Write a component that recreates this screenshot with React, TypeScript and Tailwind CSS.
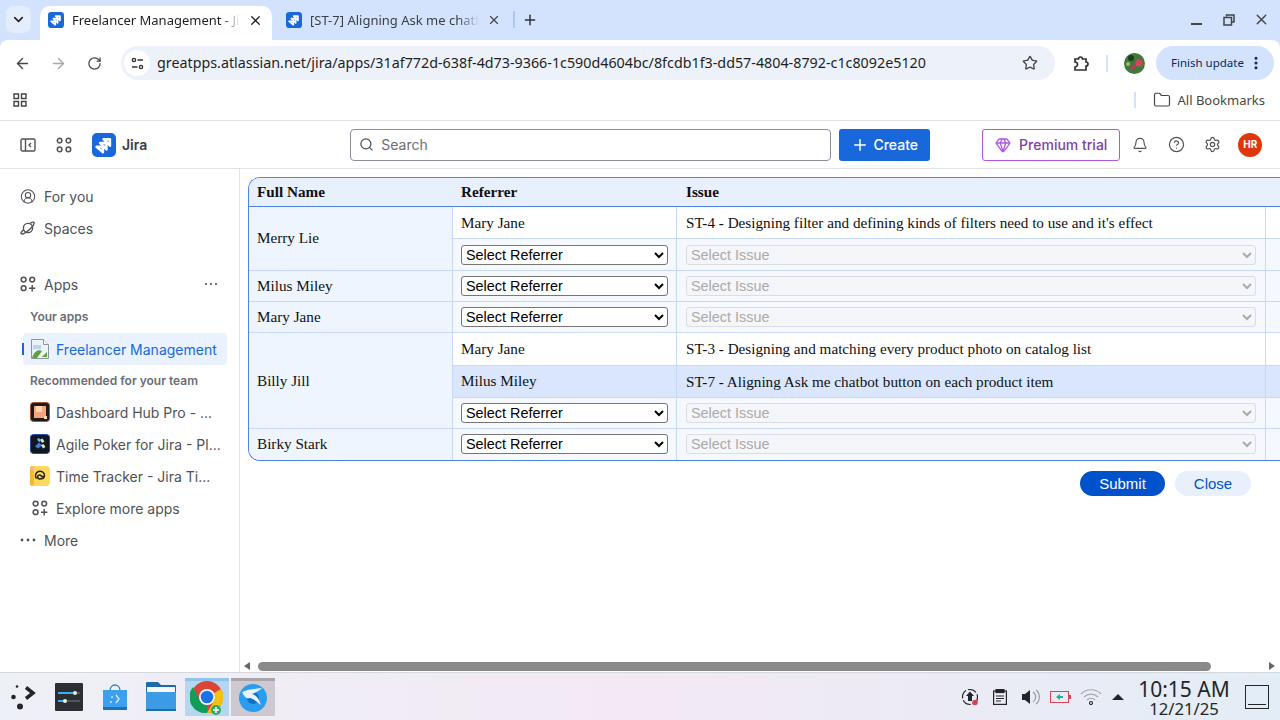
import {
  ArrowLeft,
  ArrowRight,
  Bell,
  ChevronDown,
  CircleHelp,
  CircleUserRound,
  EllipsisVertical,
  Folder,
  Gem,
  Plus,
  RotateCw,
  Search,
  Settings,
  Star,
  X,
} from "lucide-react"

const ui = "font-['Noto_Sans',sans-serif]"
const jira = "font-['Inter',sans-serif]"

type Row = {
  ref?: string
  issue?: string
  h: string
  active?: boolean
  refPad?: string
  issuePad?: string
}

type Person = { name: string; rows: Row[]; last?: boolean; namePad?: string }

const people: Person[] = [
  {
    name: "Merry Lie",
    rows: [
      {
        ref: "Mary Jane",
        issue: "ST-4 - Designing filter and defining kinds of filters need to use and it's effect",
        h: "h-[32px]",
        refPad: "pt-[2px]",
        issuePad: "pt-[2px]",
      },
      { h: "h-[32px]" },
    ],
  },
  { name: "Milus Miley", rows: [{ h: "h-[31px]" }] },
  { name: "Mary Jane", rows: [{ h: "h-[31px]" }] },
  {
    name: "Billy Jill",
    namePad: "pt-[2px]",
    rows: [
      { ref: "Mary Jane", issue: "ST-3 - Designing and matching every product photo on catalog list", h: "h-[33px]" },
      {
        ref: "Milus Miley",
        issue: "ST-7 - Aligning Ask me chatbot button on each product item",
        h: "h-[32px]",
        active: true,
        issuePad: "pt-[2px]",
      },
      { h: "h-[31px]" },
    ],
  },
  { name: "Birky Stark", rows: [{ h: "h-[31px]", refPad: "pb-[2px]", issuePad: "pb-[2px]" }], last: true },
]

function JiraLogo({ size }: { size: number }) {
  return (
    <svg width={size} height={size} viewBox="0 0 24 24" className="shrink-0">
      <rect width="24" height="24" rx="5" fill="#1868db" />
      <g fill="#ffffff" fillOpacity="0.45" stroke="#ffffff" strokeWidth="2.4" strokeLinejoin="round">
        <path d="M11.500 6.200h6.500v6.500z" />
        <path d="M8 10h6.500v6.500z" />
        <path d="M4.500 13.800H11v5.500z" />
      </g>
    </svg>
  )
}

function AppsIcon({ className = "" }: { className?: string }) {
  return (
    <svg width="16" height="16" viewBox="0 0 16 16" fill="none" stroke="#505258" strokeWidth="1.5" className={className}>
      <circle cx="3.6" cy="3.6" r="2.4" />
      <circle cx="12.2" cy="3.6" r="2.4" />
      <circle cx="3.6" cy="12.2" r="2.4" />
      <path d="M12.2 9v6.4M9 12.2h6.4" />
    </svg>
  )
}

function Tabs() {
  return (
    <div className={`${ui} flex h-10 shrink-0 items-end bg-[#d3e3fd] pl-[6px] text-[13px] text-[#1f1f1f]`}>
      <div className="mb-[7px] flex h-[27px] w-[25px] items-center justify-center rounded-lg bg-[#e4edfc]">
        <ChevronDown size={15} strokeWidth={2.5} />
      </div>
      <div className="ml-[9px] flex h-[34px] w-[232px] items-center rounded-t-[10px] bg-white pb-[6px] pl-[8px]">
        <JiraLogo size={16} />
        <span className="ml-2 mt-[2px] w-[175px] overflow-hidden whitespace-nowrap [mask-image:linear-gradient(to_right,black_86%,transparent_96%)]">
          Freelancer Management - Jira
        </span>
        <X size={15} strokeWidth={2} className="ml-[1px]" />
      </div>
      <div className="ml-[14px] flex h-[34px] items-center pb-[6px]">
        <JiraLogo size={16} />
        <span className="ml-2 mt-[2px] w-[176px] overflow-hidden whitespace-nowrap text-[#3b3f46] [mask-image:linear-gradient(to_right,black_84%,transparent_96%)]">
          [ST-7] Aligning Ask me chatbot
        </span>
        <X size={14} strokeWidth={2} className="ml-[1px] text-[#444]" />
      </div>
      <div className="mb-[12px] ml-[12px] h-[17px] w-[2px] bg-[#a8c7fa]" />
      <Plus size={16} strokeWidth={2.2} className="mb-[12px] ml-[7px] text-[#333]" />
      <div className="mb-[12px] ml-auto flex items-center text-[#444]">
        <div className="mt-[9px] h-[2px] w-[11px] bg-[#444]" />
        <svg width="12" height="12" viewBox="0 0 12 12" fill="none" stroke="#444" strokeWidth="1.5" className="ml-[21px]">
          <path d="M3.5 2.5V1h7.5v7H9M1 3.5h7.5v7.500H1z" />
        </svg>
        <X size={17} strokeWidth={2} className="ml-[18px] mr-[10px]" />
      </div>
    </div>
  )
}

function Toolbar() {
  return (
    <div className={`${ui} flex h-[46px] shrink-0 items-center rounded-t-lg bg-white text-[#474747]`}>
      <ArrowLeft size={17} strokeWidth={2} className="ml-[14px]" />
      <ArrowRight size={17} strokeWidth={2} className="ml-[19px] text-[#a8a8a8]" />
      <RotateCw size={15} strokeWidth={2} className="ml-[20px]" />
      <div className="ml-[19px] flex h-[34px] w-[934px] items-center rounded-full bg-[#edf2fa] pl-[3px]">
        <div className="flex h-[26px] w-[26px] items-center justify-center rounded-full bg-white">
          <svg width="13" height="13" viewBox="0 0 13 13" fill="none" stroke="#333" strokeWidth="1.4">
            <circle cx="3" cy="3" r="1.6" />
            <path d="M6.5 3H12M1 10h5.5" />
            <circle cx="10" cy="10" r="1.6" />
          </svg>
        </div>
        <span className="ml-[7px] text-[14.3px] text-[#1f1f1f]">
          greatpps.atlassian.net/jira/apps/31af772d-638f-4d73-9366-1c590d4604bc/8fcdb1f3-dd57-4804-8792-c1c8092e5120
        </span>
        <Star size={16} strokeWidth={2} className="ml-auto mr-[17px]" />
      </div>
      <svg width="17" height="17" viewBox="0 0 17 17" fill="none" stroke="#333" strokeWidth="1.7" className="ml-[18px]">
        <path d="M2 4h3.5a2 2 0 0 1 4 0H13v3a2 2 0 0 1 0 4v4H2v-3a2 2 0 0 0 0-5z" />
      </svg>
      <div className="ml-[16px] h-[17px] w-[2px] bg-[#d3e3fd]" />
      <svg width="21" height="21" viewBox="0 0 21 21" className="ml-[16px]">
        <circle cx="10.5" cy="10.5" r="10.5" fill="#3f7a3a" />
        <circle cx="7" cy="5" r="3" fill="#1d3d1e" />
        <circle cx="15" cy="10" r="3.6" fill="#d9425c" />
        <circle cx="9" cy="14" r="2.6" fill="#b13a59" />
        <circle cx="4" cy="11" r="2" fill="#93c26b" />
      </svg>
      <div className="ml-[11px] flex h-[34px] w-[118px] items-center rounded-full bg-[#d3e3fd] pl-[15px] text-[11.5px] text-[#0a2a5c]">
        Finish update
        <EllipsisVertical size={16} strokeWidth={2.6} className="ml-[4px]" />
      </div>
    </div>
  )
}

function Bookmarks() {
  return (
    <div className={`${ui} flex h-[35px] shrink-0 items-center border-b border-[#e2e2e2] bg-white pb-[6px] pl-[13px] text-[13px] text-[#474747]`}>
      <svg width="14" height="14" viewBox="0 0 14 14" fill="none" stroke="#444" strokeWidth="1.4">
        <path d="M1 1h4.5v4.5H1zM8.5 1H13v4.5H8.5zM1 8.5h4.5V13H1zM8.5 8.5H13V13H8.500z" />
      </svg>
      <div className="ml-auto h-[16px] w-[2px] bg-[#d3e3fd]" />
      <Folder size={18} strokeWidth={1.6} className="ml-[17px]" />
      <span className="ml-[6px] mr-[15px] mt-[2px]">All Bookmarks</span>
    </div>
  )
}

function JiraBar() {
  return (
    <div className={`${jira} flex h-[48px] shrink-0 items-center border-b border-[#e2e3e5] bg-white text-[#505258]`}>
      <svg width="16" height="16" viewBox="0 0 16 16" fill="none" stroke="#505258" strokeWidth="1.4" className="ml-[20px]">
        <rect x="1" y="2" width="14" height="12" rx="1.5" />
        <path d="M5.5 2v12M11 6l-2 2 2 2" />
      </svg>
      <svg width="16" height="16" viewBox="0 0 16 16" fill="none" stroke="#505258" strokeWidth="1.5" className="ml-[20px]">
        <circle cx="3.6" cy="3.6" r="2.3" />
        <circle cx="12.4" cy="3.6" r="2.3" />
        <circle cx="3.6" cy="12.4" r="2.3" />
        <circle cx="12.4" cy="12.4" r="2.3" />
      </svg>
      <div className="ml-[20px]">
        <JiraLogo size={24} />
      </div>
      <span className="ml-[6px] text-[14px] font-semibold text-[#3b3d42]">Jira</span>
      <div className="ml-[203px] flex h-[32px] w-[481px] items-center rounded-[4px] border border-[#8c8f97] pl-[8px] text-[14px] text-[#6b6e76]">
        <Search size={15} strokeWidth={2} className="text-[#505258]" />
        <span className="ml-[7px]">Search</span>
      </div>
      <div className="ml-[8px] flex h-[32px] w-[91px] items-center justify-center rounded-[3px] bg-[#1868db] text-[14px] font-medium text-white">
        <Plus size={18} strokeWidth={2} className="mr-[4px]" />
        Create
      </div>
      <div className="ml-[52px] flex h-[32px] w-[138px] items-center justify-center rounded-[3px] border border-[#af59e1] text-[14px] font-medium text-[#803fa5]">
        <Gem size={16} strokeWidth={2} className="mr-[8px] text-[#af59e1]" />
        Premium trial
      </div>
      <Bell size={16} strokeWidth={1.7} className="ml-[12px]" />
      <CircleHelp size={17} strokeWidth={1.7} className="ml-[20px]" />
      <Settings size={17} strokeWidth={1.7} className="ml-[19px]" />
      <div className="ml-[17px] flex h-[24px] w-[24px] items-center justify-center rounded-full bg-[#e0360c] text-[10px] font-bold text-white">
        HR
      </div>
    </div>
  )
}

function NavRow({ icon, label, indent }: { icon: React.ReactNode; label: string; indent?: boolean }) {
  return (
    <div className={`flex h-[32px] items-center whitespace-nowrap text-[14px] ${indent ? "pl-[30px]" : "pl-[20px]"}`}>
      <div className={`flex items-center justify-center ${indent ? "w-[20px]" : "w-[16px]"}`}>{icon}</div>
      <span className={indent ? "ml-[6px]" : "ml-[8px]"}>{label}</span>
    </div>
  )
}

function AppLogo({ bg, ring, children }: { bg: string; ring: string; children: React.ReactNode }) {
  return (
    <svg width="20" height="20" viewBox="0 0 20 20" className="shrink-0">
      <rect x="0.5" y="0.5" width="19" height="19" rx="3" fill={bg} stroke={ring} />
      {children}
    </svg>
  )
}

function Sidebar() {
  return (
    <div className={`${jira} w-[240px] shrink-0 border-r border-[#e2e3e5] bg-white pt-[11px] text-[#505258]`}>
      <NavRow icon={<CircleUserRound size={17} strokeWidth={1.6} />} label="For you" />
      <NavRow
        icon={
          <svg width="16" height="14" viewBox="0 0 16 14" fill="none" stroke="#505258" strokeWidth="1.4">
            <circle cx="8" cy="7" r="4.6" />
            <path d="M3.8 8.6C1.5 10.6.6 12 1.2 12.6c1 .9 4.6-.9 8-3.9s5.600-6.400 4.700-7.300c-.5-.5-1.900-.1-3.800 1" />
          </svg>
        }
        label="Spaces"
      />
      <div className="h-[24px]" />
      <NavRow icon={<AppsIcon />} label="Apps" />
      <div className="-mt-[32px] flex h-[32px] items-center justify-end pr-[21px] text-[#505258]">
        <svg width="14" height="4" viewBox="0 0 14 4" fill="#505258">
          <circle cx="2" cy="2" r="1.1" />
          <circle cx="7" cy="2" r="1.1" />
          <circle cx="12" cy="2" r="1.1" />
        </svg>
      </div>
      <div className="flex h-[33px] items-center pl-[30px] text-[12px] font-semibold text-[#6b6e76]">Your apps</div>
      <div className="ml-[23px] flex h-[32px] w-[204px] items-center rounded-[4px] bg-[#e9f2fe] text-[14px] text-[#1868db]">
        <div className="-ml-[1px] h-[12px] w-[2px] bg-[#1868db]" />
        <svg width="18" height="20" viewBox="0 0 18 20" className="ml-[7px] shrink-0">
          <path d="M.5.5h12l5 5v14H.5z" fill="#eef1f5" stroke="#8f959e" />
          <path d="M12.500.500v5h5" fill="#fff" stroke="#8f959e" />
          <path d="M2 6h8v4H2z" fill="#b9d3f3" />
          <path d="M1 19c2-7 7-9 10-7l-5 7z" fill="#5aa23a" />
          <path d="M11 18l5-5v5z" fill="#5aa23a" />
        </svg>
        <span className="ml-[7px] whitespace-nowrap">Freelancer Management</span>
      </div>
      <div className="flex h-[31px] items-center pl-[30px] text-[12px] font-semibold text-[#6b6e76]">
        Recommended for your team
      </div>
      <NavRow
        indent
        icon={
          <AppLogo bg="#1d1a1a" ring="#a8563a">
            <rect x="4" y="4" width="12" height="12" fill="#f7a37c" />
            <rect x="6" y="4" width="6" height="6" fill="#ffd8b0" />
            <rect x="14" y="14" width="3" height="3" fill="#ffd8b0" />
          </AppLogo>
        }
        label="Dashboard Hub Pro - ..."
      />
      <NavRow
        indent
        icon={
          <AppLogo bg="#101722" ring="#1f4fa8">
            <path d="M5 12.500l4-4 3 3-4 3z" fill="#3d7fe0" />
            <path d="M10 5.500l2.500-1 2 3-2.500 1.500z" fill="#cfe3c8" />
            <path d="M11 11l2.500-1 2 3-2.500 1.500z" fill="#e8e3b8" />
            <path d="M7 5l2-1 2 3-2 1z" fill="#8db4e8" />
          </AppLogo>
        }
        label="Agile Poker for Jira - Pl..."
      />
      <NavRow
        indent
        icon={
          <AppLogo bg="#ffd95e" ring="#ffd95e">
            <rect x="0" y="0" width="4" height="20" rx="2" fill="#f4b82f" />
            <circle cx="2.500" cy="3" r="1.700" fill="#f7b6c2" />
            <path d="M15 10.500h-3.500a2 2 0 1 0-2 2.500c3 0 5-1 5-3.500a4.500 4.500 0 1 0-8 3" fill="none" stroke="#2b2410" strokeWidth="1.500" />
          </AppLogo>
        }
        label="Time Tracker - Jira Ti..."
      />
      <NavRow indent icon={<AppsIcon />} label="Explore more apps" />
      <NavRow
        icon={
          <svg width="16" height="4" viewBox="0 0 16 4" fill="#505258">
            <circle cx="2" cy="2" r="1.4" />
            <circle cx="8" cy="2" r="1.4" />
            <circle cx="14" cy="2" r="1.4" />
          </svg>
        }
        label="More"
      />
    </div>
  )
}

function ReferrerSelect() {
  return (
    <select className="block h-[20px] w-[207px] rounded-[3px] border border-[#767676] bg-white font-['Liberation_Sans',sans-serif] text-[14.4px] leading-none text-black">
      <option>Select Referrer</option>
    </select>
  )
}

function IssueSelect() {
  return (
    <select
      disabled
      className="block h-[20px] w-[570px] rounded-[3px] border border-[#dcdde2] bg-[#f5f6fa] font-['Liberation_Sans',sans-serif] text-[14.4px] leading-none text-[#aaaaaa]"
    >
      <option>Select Issue</option>
    </select>
  )
}

function MainTable() {
  const line = "border-[#c6d8fb]"
  return (
    <div className="w-[1060px] shrink-0 overflow-hidden rounded-l-[12px] border-y border-l border-[#4f81f2]">
      <table className="w-[1059px] table-fixed border-separate border-spacing-0 font-['Liberation_Serif',serif] text-[15.2px] text-[#111]">
        <colgroup>
          <col className="w-[204px]" />
          <col className="w-[224px]" />
          <col className="w-[589px]" />
          <col />
        </colgroup>
        <thead>
          <tr className="h-[29px] bg-[#e8effd] text-left">
            <th className="border-b border-[#4f81f2] px-2 font-bold">Full Name</th>
            <th className="border-b border-[#4f81f2] px-2 font-bold">Referrer</th>
            <th className="border-b border-[#4f81f2] px-[9px] font-bold">Issue</th>
            <th className="border-b border-[#4f81f2]" />
          </tr>
        </thead>
        <tbody>
          {people.flatMap((person) =>
            person.rows.map((row, i) => {
              const isLastRow = person.last && i === person.rows.length - 1
              const border = isLastRow ? "" : `border-b ${line}`
              const bg = row.active ? "bg-[#d9e6fd]" : row.ref ? "bg-white" : "bg-[#f5f8ff]"
              return (
                <tr key={`${person.name}-${i}`} className={row.h}>
                  {i === 0 && (
                    <td
                      rowSpan={person.rows.length}
                      className={`border-r bg-[#eff5ff] px-2 ${line} ${person.last ? "" : "border-b"} ${person.namePad ?? ""}`}
                    >
                      {person.name}
                    </td>
                  )}
                  <td className={`border-r px-2 ${line} ${border} ${bg} ${row.refPad ?? ""}`}>
                    {row.ref ?? <ReferrerSelect />}
                  </td>
                  <td className={`border-r px-[9px] ${line} ${border} ${bg} ${row.issuePad ?? ""}`}>
                    {row.issue ?? <IssueSelect />}
                  </td>
                  <td className={`${border} ${bg}`} />
                </tr>
              )
            })
          )}
        </tbody>
      </table>
    </div>
  )
}

function Content() {
  return (
    <div className="flex min-w-0 flex-1 flex-col overflow-hidden bg-white">
      <div className="flex min-h-0 flex-1 flex-col overflow-hidden pl-[8px] pt-[8px]">
        <MainTable />
        <div className="mt-[10px] flex w-[1003px] justify-end gap-[10px] font-['Liberation_Sans',sans-serif] text-[15px]">
          <div className="flex h-[25px] w-[85px] items-center justify-center rounded-full bg-[#0052cc] pt-px text-white">Submit</div>
          <div className="flex h-[25px] w-[76px] items-center justify-center rounded-full bg-[#e8f0fe] pt-px text-[#0052cc]">Close</div>
        </div>
      </div>
      <div className="flex h-[12px] shrink-0 items-center pl-[4px] pr-[5px]">
        <div className="h-0 w-0 border-y-[4px] border-r-[6px] border-y-transparent border-r-[#666]" />
        <div className="ml-[8px] h-[9px] w-[953px] rounded-full bg-[#8a8a8a]" />
        <div className="ml-auto h-0 w-0 border-y-[4px] border-l-[6px] border-y-transparent border-l-[#666]" />
      </div>
    </div>
  )
}

function Taskbar() {
  return (
    <div className={`${ui} flex h-[48px] shrink-0 items-center border-t border-[#d5d8dd] bg-gradient-to-r from-[#eef0f7] via-[#f3e9f4] to-[#e3edf6] text-[#232629]`}>
      <svg width="26" height="26" viewBox="0 0 26 26" className="ml-[10px]" fill="#232629">
        <path d="M16 3.500l7 5.500-7 5.500" fill="none" stroke="#232629" strokeWidth="3.500" />
        <circle cx="3.500" cy="13" r="2.300" />
        <circle cx="7" cy="2.500" r="1.300" />
        <circle cx="10" cy="22.500" r="3" />
      </svg>
      <svg width="28" height="28" viewBox="0 0 28 28" className="ml-[19px]">
        <rect width="28" height="28" rx="1" fill="#2b2e33" />
        <path d="M3 10h22M3 18h22" stroke="#555" strokeWidth="2" />
        <path d="M3 10h15M3 18h7" stroke="#3daee9" strokeWidth="2" />
        <circle cx="20" cy="10" r="2" fill="#eee" />
        <circle cx="10" cy="18" r="2" fill="#eee" />
      </svg>
      <svg width="26" height="28" viewBox="0 0 26 28" className="ml-[19px]">
        <path d="M8 8c0-8 10-8 10 0" fill="none" stroke="#2a7fc9" strokeWidth="1.300" />
        <path d="M1 7h24v19a1 1 0 0 1-1 1H2a1 1 0 0 1-1-1z" fill="#3da0ee" />
        <path d="M1 24h24v2a1 1 0 0 1-1 1H2a1 1 0 0 1-1-1z" fill="#1d6fb8" />
        <path d="M14 12l3 4-3 4" fill="none" stroke="#cfe8fb" strokeWidth="1.500" />
        <circle cx="10" cy="14" r="1" fill="#cfe8fb" />
        <circle cx="9" cy="19" r="1" fill="#cfe8fb" />
      </svg>
      <svg width="30" height="29" viewBox="0 0 30 29" className="ml-[18px]">
        <path d="M0 1a1 1 0 0 1 1-1h11l3 3h14a1 1 0 0 1 1 1v24a1 1 0 0 1-1 1H1a1 1 0 0 1-1-1z" fill="#1d6ba8" />
        <rect x="1" y="5" width="28" height="5" fill="#f4f7fa" />
        <path d="M0 10h30v18a1 1 0 0 1-1 1H1a1 1 0 0 1-1-1z" fill="#3d9be6" />
        <path d="M0 27h30v1a1 1 0 0 1-1 1H1a1 1 0 0 1-1-1z" fill="#1d6ba8" />
      </svg>
      <div className="ml-[9px] flex h-[38px] w-[44px] items-center justify-center border-t-[3px] border-[#8fc3ea] bg-[#b6d6ef]">
        <svg width="34" height="34" viewBox="0 0 34 34">
          <circle cx="17" cy="16" r="16" fill="#db4437" />
          <path d="M31 8a16 16 0 0 1-14 24l7-12a8 8 0 0 0 0-8z" fill="#f4c20d" />
          <path d="M17 32A16 16 0 0 1 3 6l7 14a8 8 0 0 0 7 4z" fill="#0f9d58" />
          <circle cx="17" cy="16" r="8" fill="#fff" />
          <circle cx="17" cy="16" r="6.300" fill="#1a73e8" />
          <circle cx="26" cy="29" r="5" fill="#2fa866" />
          <path d="M26 26v6M23 29h6" stroke="#fff" strokeWidth="1.500" />
        </svg>
      </div>
      <div className="ml-[2px] flex h-[38px] w-[44px] items-center justify-center border-t-[3px] border-[#a9a5ab] bg-[#cec9d0]">
        <svg width="28" height="28" viewBox="0 0 28 28">
          <circle cx="14" cy="14" r="14" fill="#2a9df0" />
          <circle cx="14" cy="14" r="6" fill="#146fc0" />
          <path d="M3 8c6-3 13-3 20-4-3 3-7 5-10 6 4 1 7 5 9 11-4-3-7-6-11-7-3 1-5 0-8-6z" fill="#e8f4fc" />
        </svg>
      </div>
      <svg width="18" height="18" viewBox="0 0 18 18" className="ml-auto" fill="none">
        <circle cx="9" cy="9" r="7.500" stroke="#232629" strokeWidth="1.200" strokeDasharray="9 2" />
        <path d="M9 3.500L13 8h-2v5H7V8H5z" fill="#232629" />
        <circle cx="14" cy="14.500" r="2.800" fill="#da4453" />
      </svg>
      <svg width="14" height="16" viewBox="0 0 14 16" className="ml-[14px]" fill="none" stroke="#232629" strokeWidth="1.200">
        <rect x="0.600" y="2" width="12.800" height="13.400" />
        <rect x="3" y="0.500" width="8" height="3" fill="#232629" />
        <path d="M3 7h8M3 9.500h8M3 12h5" />
      </svg>
      <svg width="18" height="16" viewBox="0 0 18 16" className="ml-[15px]">
        <path d="M0 5h3l5-4v14l-5-4H0z" fill="#232629" />
        <path d="M11 3a6 6 0 0 1 0 10M14 1a9 9 0 0 1 0 14" fill="none" stroke="#9a9da1" strokeWidth="1.200" />
      </svg>
      <svg width="21" height="12" viewBox="0 0 21 12" className="ml-[10px]">
        <rect x="0.500" y="0.500" width="18" height="11" fill="none" stroke="#da4453" />
        <rect x="19" y="4" width="2" height="4" fill="#da4453" />
        <path d="M6 6l4-3v2h3v2h-3v2z" fill="#1cb58c" />
      </svg>
      <svg width="22" height="16" viewBox="0 0 22 16" className="ml-[9px]" fill="none" stroke="#a5a8ac" strokeWidth="1.100">
        <path d="M1 5a14 14 0 0 1 20 0M4 8a10 10 0 0 1 14 0M7 11a5.500 5.500 0 0 1 8 0" />
        <circle cx="11" cy="14" r="1.500" stroke="#232629" />
      </svg>
      <div className="ml-[10px] h-0 w-0 border-x-[6px] border-b-[6px] border-x-transparent border-b-[#232629]" />
      <div className="ml-[13px] mt-[3px] flex w-[94px] flex-col items-center">
        <span className="whitespace-nowrap text-[21px] leading-[22px]">10:15 AM</span>
        <span className="whitespace-nowrap text-[16.7px] leading-[18px]">12/21/25</span>
      </div>
      <div className="ml-[14px] mr-[11px] flex h-[24px] w-[24px] items-end border border-[#232629] px-[2px] pb-[3px]">
        <div className="h-[1px] w-full bg-[#232629]" />
      </div>
    </div>
  )
}

export default function App() {
  return (
    <div className="flex h-screen w-full flex-col overflow-hidden bg-[#d3e3fd]">
      <Tabs />
      <Toolbar />
      <Bookmarks />
      <JiraBar />
      <div className="flex min-h-0 flex-1">
        <Sidebar />
        <Content />
      </div>
      <Taskbar />
    </div>
  )
}
